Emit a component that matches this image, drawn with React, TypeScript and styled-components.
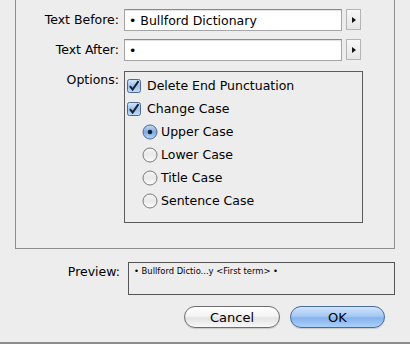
import React from "react";
import styled, { createGlobalStyle } from "styled-components";

const GlobalStyle = createGlobalStyle`
  html, body {
    margin: 0;
    padding: 0;
    background: #ededed;
  }
  body {
    font-family: "DejaVu Sans", "Liberation Sans", sans-serif;
    font-size: 12.5px;
    color: #000;
  }
`;

const Page = styled.div`
  width: 410px;
  height: 344px;
  box-sizing: border-box;
  background: #ededed;
  display: flex;
  flex-direction: column;
  overflow: hidden;
  border-bottom: 2px solid #8c8c8c;
`;

const Group = styled.div`
  margin: 0 15px 0 15px;
  height: 249px;
  box-sizing: border-box;
  border: 1px solid #8e8e8e;
  border-top: none;
  padding: 9px 0 0 0;
  display: grid;
  grid-template-columns: 103px 1fr;
  column-gap: 5px;
  row-gap: 8px;
  align-content: start;
`;

const Label = styled.div<{ $top?: number }>`
  text-align: right;
  padding-top: ${(p) => p.$top ?? 3}px;
  white-space: nowrap;
`;

const FieldRow = styled.div`
  display: flex;
  gap: 4px;
  align-items: stretch;
`;

const Input = styled.div`
  width: 218px;
  height: 22px;
  box-sizing: border-box;
  background: #fff;
  border: 1px solid #a5a5a5;
  border-top-color: #8a8a8a;
  box-shadow: inset 0 1px 1px rgba(0, 0, 0, 0.12);
  padding: 2px 4px;
  line-height: 17px;
  white-space: nowrap;
`;

const ArrowButton = styled.div`
  width: 15px;
  height: 21px;
  box-sizing: border-box;
  border: 1px solid #b4b4b4;
  background: linear-gradient(#f7f7f7, #e6e6e6);
  display: flex;
  align-items: center;
  justify-content: center;
`;

const Triangle = styled.div`
  width: 0;
  height: 0;
  border-top: 3px solid transparent;
  border-bottom: 3px solid transparent;
  border-left: 4px solid #111;
`;

const OptionsBox = styled.div`
  width: 239px;
  height: 152px;
  box-sizing: border-box;
  margin-top: 2px;
  border: 1px solid #5c5c5c;
  padding: 6px 0 0 2px;
  display: flex;
  flex-direction: column;
  gap: 8px;
`;

const Option = styled.div<{ $indent?: boolean }>`
  display: flex;
  align-items: center;
  height: 15px;
  gap: ${(p) => (p.$indent ? 3 : 6)}px;
  padding-left: ${(p) => (p.$indent ? 15 : 0)}px;
  white-space: nowrap;
`;

const Bottom = styled.div`
  flex: 1;
  display: flex;
  flex-direction: column;
  padding: 13px 15px 0 0;
`;

const PreviewRow = styled.div`
  display: flex;
  justify-content: flex-end;
  gap: 8px;
`;

const PreviewLabel = styled.div`
  padding-top: 2px;
`;

const PreviewBox = styled.div`
  width: 267px;
  height: 33px;
  box-sizing: border-box;
  border: 1px solid #555;
  font-size: 8.4px;
  padding: 3px 5px;
  white-space: nowrap;
`;

const ButtonRow = styled.div`
  display: flex;
  justify-content: flex-end;
  gap: 10px;
  padding: 11px 10px 0 0;
`;

const Pill = styled.div<{ $primary?: boolean }>`
  width: ${(p) => (p.$primary ? 95 : 96)}px;
  height: 22px;
  box-sizing: border-box;
  border-radius: 11px;
  border: 1px solid ${(p) => (p.$primary ? "#4a6c99" : "#6e6e6e")};
  background: ${(p) =>
    p.$primary
      ? "linear-gradient(#cfe3fb 0%, #a6c9f4 45%, #86b3ee 55%, #a9d0fb 100%)"
      : "linear-gradient(#ffffff 0%, #f3f3f3 45%, #e3e3e3 55%, #f8f8f8 100%)"};
  box-shadow: 0 1px 1px rgba(0, 0, 0, 0.15);
  display: flex;
  align-items: center;
  justify-content: center;
  font-size: 13px;
`;

const CheckBox = () => (
  <svg width="14" height="14" viewBox="0 0 14 14">
    <defs>
      <linearGradient id="cb" x1="0" y1="0" x2="0" y2="1">
        <stop offset="0" stopColor="#d6e7fa" />
        <stop offset="0.5" stopColor="#9cc0ea" />
        <stop offset="1" stopColor="#c3ddf8" />
      </linearGradient>
    </defs>
    <rect x="0.5" y="0.5" width="13" height="13" rx="2" fill="url(#cb)" stroke="#4f6b94" />
    <path d="M3 7.2 L5.6 10.5 L11.5 2.2" fill="none" stroke="#1a2233" strokeWidth="2" />
  </svg>
);

const Radio = ({ on }: { on?: boolean }) => (
  <svg width="16" height="16" viewBox="0 0 16 16">
    <defs>
      <linearGradient id="rOn" x1="0" y1="0" x2="0" y2="1">
        <stop offset="0" stopColor="#c6dcf6" />
        <stop offset="0.5" stopColor="#7fa9df" />
        <stop offset="1" stopColor="#b8d6f8" />
      </linearGradient>
      <linearGradient id="rOff" x1="0" y1="0" x2="0" y2="1">
        <stop offset="0" stopColor="#f4f4f4" />
        <stop offset="0.5" stopColor="#e9e9e9" />
        <stop offset="1" stopColor="#fdfdfd" />
      </linearGradient>
    </defs>
    <circle cx="8" cy="8" r="7" fill={on ? "url(#rOn)" : "url(#rOff)"} stroke={on ? "#4d6a93" : "#7a7a7a"} />
    {on && <circle cx="8" cy="8" r="2.3" fill="#15203a" />}
  </svg>
);

const App = () => {
  return (
    <>
      <GlobalStyle />
      <Page>
        <Group>
          <Label>Text Before:</Label>
          <FieldRow>
            <Input>• Bullford Dictionary</Input>
            <ArrowButton>
              <Triangle />
            </ArrowButton>
          </FieldRow>

          <Label>Text After:</Label>
          <FieldRow>
            <Input>•</Input>
            <ArrowButton>
              <Triangle />
            </ArrowButton>
          </FieldRow>

          <Label $top={3}>Options:</Label>
          <OptionsBox>
            <Option>
              <CheckBox />
              Delete End Punctuation
            </Option>
            <Option>
              <CheckBox />
              Change Case
            </Option>
            <Option $indent>
              <Radio on />
              Upper Case
            </Option>
            <Option $indent>
              <Radio />
              Lower Case
            </Option>
            <Option $indent>
              <Radio />
              Title Case
            </Option>
            <Option $indent>
              <Radio />
              Sentence Case
            </Option>
          </OptionsBox>
        </Group>

        <Bottom>
          <PreviewRow>
            <PreviewLabel>Preview:</PreviewLabel>
            <PreviewBox>• Bullford Dictio...y &lt;First term&gt; •</PreviewBox>
          </PreviewRow>
          <ButtonRow>
            <Pill>Cancel</Pill>
            <Pill $primary>OK</Pill>
          </ButtonRow>
        </Bottom>
      </Page>
    </>
  );
};

export default App;
